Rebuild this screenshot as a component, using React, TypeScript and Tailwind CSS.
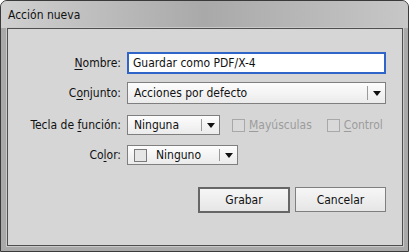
import React from "react";

const font = { fontFamily: '"DejaVu Sans Condensed", "DejaVu Sans", sans-serif' };

// small black dropdown arrow
const Arrow = () => (
  <svg width="8" height="5" viewBox="0 0 8 5">
    <path d="M0 0 H8 L4 5 Z" fill="#111" />
  </svg>
);

type SelectProps = {
  width: string;
  height: string;
  children: React.ReactNode;
};
const Select = ({ width, height, children }: SelectProps) => (
  <div
    className={`flex items-stretch border border-[#7f7f7f] bg-gradient-to-b from-[#fdfdfd] to-[#ebebeb] ${width} ${height}`}
  >
    <div className="flex flex-1 items-center pl-[6px] text-[#111]">{children}</div>
    <div className="my-[3px] w-px bg-[#9a9a9a]"></div>
    <div className="flex w-[17px] items-center justify-center">
      <Arrow />
    </div>
  </div>
);

const Label = ({ children }: { children: React.ReactNode }) => (
  <div className="w-[119px] shrink-0 pr-[6px] text-right text-[#111]">{children}</div>
);

const Check = ({ children }: { children: React.ReactNode }) => (
  <div className="flex items-center gap-[4px] text-[#9c9c9c]">
    <div className="h-[13px] w-[13px] border border-[#a8a8a8] bg-[#d9d9d9]"></div>
    <span>{children}</span>
  </div>
);

export default function App() {
  return (
    <div
      style={font}
      className="flex h-[252px] w-[409px] flex-col rounded-t-[7px] border border-[#3a3a3a] bg-[#a9a9a9] text-[12px] leading-none"
    >
      {/*title bar */}
      <div className="flex h-[27px] items-center rounded-t-[6px] bg-gradient-to-r from-[#d0d0d0] via-[#a9a9a9] to-[#c7c7c7] pl-[7px] text-[12px] text-[#111]">
        Acción nueva
      </div>
      {/*content panel */}
      <div className="mb-[5px] ml-[6px] mr-[5px] flex flex-1 flex-col border border-[#4f4f4f] bg-[#d6d6d6] shadow-[0_0_0_1px_#c9c9c9]">
        {/*Nombre */}
        <div className="mt-[23px] flex items-center">
          <Label>
            <span className="underline underline-offset-2">N</span>ombre:
          </Label>
          <div className="flex h-[22px] w-[259px] items-center border-2 border-[#2f64c8] bg-white pl-[4px] text-[#111]">
            Guardar como PDF/X-4
          </div>
        </div>
        {/*Conjunto */}
        <div className="mt-[8px] flex items-center">
          <Label>
            C<span className="underline underline-offset-2">o</span>njunto:
          </Label>
          <Select width="w-[259px]" height="h-[22px]">
            Acciones por defecto
          </Select>
        </div>
        {/*Tecla de funcion */}
        <div className="mt-[11px] flex items-center">
          <Label>
            Tecla de <span className="underline underline-offset-2">f</span>unción:
          </Label>
          <Select width="w-[93px]" height="h-[20px]">
            Ninguna
          </Select>
          <div className="ml-[12px] flex gap-[15px]">
            <Check>
              <span className="underline underline-offset-2">M</span>ayúsculas
            </Check>
            <Check>
              <span className="underline underline-offset-2">C</span>ontrol
            </Check>
          </div>
        </div>
        {/*Color */}
        <div className="mt-[10px] flex items-center">
          <Label>
            Co<span className="underline underline-offset-2">l</span>or:
          </Label>
          <Select width="w-[111px]" height="h-[20px]">
            <div className="mr-[9px] h-[13px] w-[13px] border border-[#7a7a7a] bg-[#e6e6e6]"></div>
            Ninguno
          </Select>
        </div>
        {/*buttons */}
        <div className="mt-[22px] flex justify-end gap-[5px] pr-[16px]">
          <button className="h-[26px] w-[92px] border-2 border-[#666] bg-gradient-to-b from-[#f6f6f6] to-[#e6e6e6] text-[#111]">
            Grabar
          </button>
          <button className="h-[25px] w-[91px] border border-[#7f7f7f] bg-gradient-to-b from-[#f6f6f6] to-[#e6e6e6] text-[#111]">
            Cancelar
          </button>
        </div>
      </div>
    </div>
  );
}
